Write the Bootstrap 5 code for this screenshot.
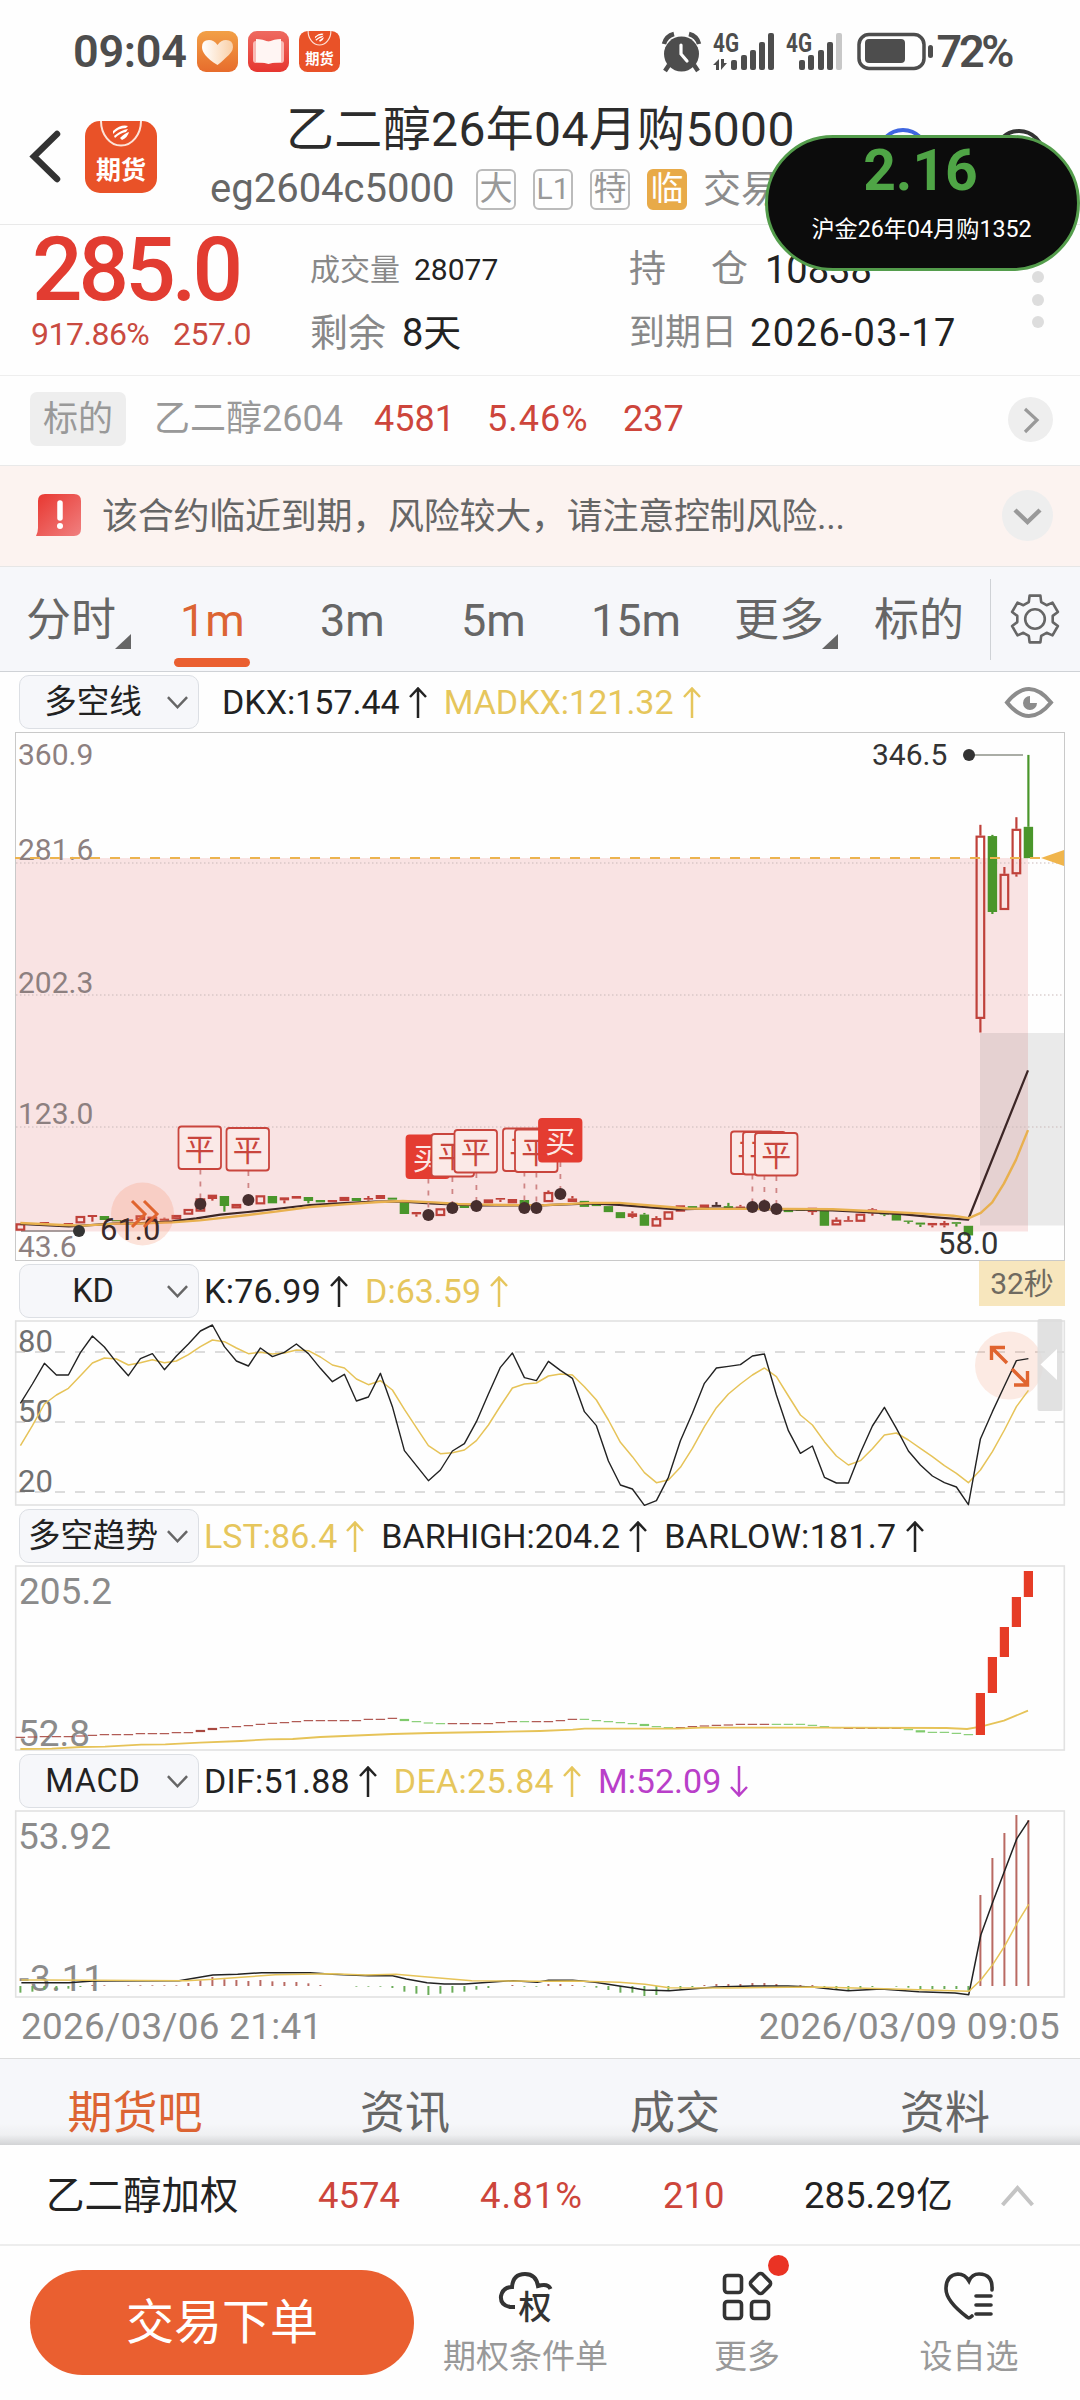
<!DOCTYPE html>
<html lang="zh-CN">
<head>
<meta charset="utf-8">
<meta name="viewport" content="width=device-width, initial-scale=1">
<title>乙二醇26年04月购5000</title>
<link href="https://cdn.jsdelivr.net/npm/bootstrap@5.3.0/dist/css/bootstrap.min.css" rel="stylesheet">
<style>
body{font-family:Roboto,"Noto Sans CJK SC",sans-serif;line-height:1;color:#222;background:#fefefe;width:1080px;overflow-x:hidden}
svg{display:block;flex:none;overflow:visible}
svg text{font-family:Roboto,"Noto Sans CJK SC",sans-serif}
.statusbar{height:100px;padding:0 69px 26px 73px;color:#4d4d4d;font-size:45px;font-weight:600}
.statusbar .app-ico{margin-right:10px}
.titlebar{height:125px;border-bottom:1px solid #e9e9e9}
.title-main{font-size:48px;color:#2c2c2c;margin:6px 0 0 128px;height:48px;letter-spacing:.35px}
.title-sub{font-size:40px;color:#666;margin:14px 0 0 52px;height:42px}
.tag{width:40px;height:41px;border:2px solid #bbb;border-radius:6px;font-size:33px;color:#999;margin-right:17px;padding-bottom:1px}
.tag-warn{background:#e8aa48;border-color:#e8aa48;color:#fff}
.float-pill{top:135px;left:765px;width:315px;height:136px;border:3px solid #549d4c;border-radius:68px;background:#0c0c0c;z-index:5}
.float-pill .num{font-size:57px;font-weight:700;color:#4fa546;margin:4px 4px 0 0}
.float-pill .cap{font-size:23.2px;color:#fff;margin:19px 2px 0 0}
.quote{height:151px;border-bottom:1px solid #eee}
.r1{height:84px;padding-top:5px}.r2{height:48px}
.q1{width:310px;padding-left:31px}.q2{width:319px}
.price{font-size:89px;font-weight:500;color:#e23c31;letter-spacing:-4px;padding-left:1px}
.chg{font-size:32px;color:#c94a40;letter-spacing:-.5px;padding-top:2px}
.lbl{color:#888}
.under{height:90px;border-bottom:1px solid #e9e9e9;padding:0 27px 3px 30px;font-size:36px}
.under .flag{width:96px;height:54px;background:#eee;border-radius:7px;color:#999;font-size:35px}
.up{color:#cd453b}
.round-btn{background:#eee;border-radius:50%}
.notice{height:101px;background:#fcf3f0;border-bottom:1px solid #e6e6e6;padding:0 27px 2px 36px;color:#666;font-size:36px}
.period{height:105px;background:#f6f7fa;border-bottom:1px solid #cfd2d6;color:#666;font-size:45px;white-space:nowrap}
.period .tb{position:relative;height:104px;flex:none;padding-top:2px}
.period .tb.on{color:#dc6433}
.period .tb.on::after{content:"";position:absolute;left:-6px;right:-5px;bottom:4px;height:9px;border-radius:5px;background:#ea5f30}
.corner::after{content:"";position:absolute;right:-17px;bottom:22px;border-left:16px solid transparent;border-bottom:15px solid #666}
.ind{height:60px;font-size:34px;padding-left:19px}
.ind .sel{width:180px;height:54px;border:1.5px solid #dcdfe4;border-radius:10px;background:#f6f7fa;font-size:32.5px;padding-right:9px}
.ind .sel span{flex:1;text-align:center;white-space:nowrap}
.ind .arr{margin:0 17px 0 9px}
.gold{color:#e6c65c}
.vio{color:#b93fc9}
.countdown{width:86px;height:45px;background:#f7e6bd;color:#6f6a60;font-size:30px;margin-right:15px}
.dates{height:60px;padding:0 20px 2px 21px;color:#8b8b8b;font-size:36.8px;letter-spacing:.3px}
.lower-tabs{height:87px;border-top:1px solid #ddd;background:linear-gradient(#f6f7fa 75%,#eff0f2 88%,#d2d3d5);color:#666;font-size:45px}
.lower-tabs div{margin-top:12px;height:74px;line-height:86px}
.idx{height:101px;border-bottom:2px solid #ededed;font-size:36.5px;padding:3px 0 0 46px}
.foot{height:154px;padding-left:30px}
.foot .trade{width:384px;height:105px;border-radius:53px;background:#ea5f30;color:#fff;font-size:48px;margin-top:24px;border:0}
.foot .item{color:#999;font-size:33px;margin-top:24px}
.foot .item svg{margin-bottom:18px}
.reddot{width:21px;height:21px;border-radius:50%;background:#ea3324;top:-15px;left:46px}
</style>
<script src="https://cdn.jsdelivr.net/npm/bootstrap@5.3.0/dist/js/bootstrap.bundle.min.js"></script>
</head>
<body>
<svg width="0" height="0" class="position-absolute">
  <defs>
    <linearGradient id="g1" x1="0" y1="0" x2="0" y2="1"><stop offset="0" stop-color="#f2a046"/><stop offset="1" stop-color="#e76c2c"/></linearGradient>
    <linearGradient id="g2" x1="0" y1="0" x2="0" y2="1"><stop offset="0" stop-color="#ee6a60"/><stop offset="1" stop-color="#e63630"/></linearGradient>
    <linearGradient id="g3" x1="0" y1="0" x2="1" y2="1"><stop offset="0" stop-color="#e8362f"/><stop offset="1" stop-color="#f08080"/></linearGradient>
    <linearGradient id="g4" x1="0" y1="0" x2="1" y2="0"><stop offset="0" stop-color="#fff"/><stop offset="1" stop-color="#f9cfa6"/></linearGradient>
    <symbol id="logo" viewBox="0 0 72 72"><rect width="72" height="72" rx="15" fill="#e95228"/><path d="M16 0a19.5 24 0 0 0 40 0" fill="none" stroke="#fde3d8" stroke-width="2"/><path d="M28 10q8-7 15-5l-2 2q-8 0-13 6zM29 15q7-6 14-7l-2 3q-6 1-11 6zM35 17q5-5 9-6-1 5-7 8z" fill="#fff"/><text x="36" y="58" font-size="25" font-weight="700" fill="#fff" text-anchor="middle">期货</text></symbol>
    <symbol id="up" viewBox="0 0 18 31"><path d="M9 31V2M1 10L9 1.5L17 10" fill="none" stroke="currentColor" stroke-width="2.5"/></symbol>
    <symbol id="dn" viewBox="0 0 18 31"><path d="M9 0V29M1 21L9 29.5L17 21" fill="none" stroke="currentColor" stroke-width="2.5"/></symbol>
    <symbol id="chev" viewBox="0 0 24 15"><path d="M2 2L12 12.500L22 2" fill="none" stroke="#666" stroke-width="2.600"/></symbol>
  </defs>
</svg>

<div class="statusbar d-flex align-items-end">
  <div class="me-auto d-flex align-items-center">
    <span style="margin-right:10px;letter-spacing:-.3px">09:04</span>
    <svg class="app-ico" width="41" height="41"><rect width="41" height="41" rx="9" fill="url(#g1)"/><path d="M20.500 34C9 27 5 21 5 16q0-7 7-7 5 0 8.500 5 3.500-5 8.500-5 7 0 7 7 0 5-7.500 11-5 5-8 7z" fill="url(#g4)"/></svg>
    <svg class="app-ico" width="41" height="41"><rect width="41" height="41" rx="9" fill="url(#g2)"/><rect x="5" y="10" width="31" height="22" rx="3" fill="#f9bab5"/><path d="M8 8q7 0 12.500 3Q26 8 33 8V31q-7 0-12.500 2Q15 31 8 31z" fill="#fff5f3"/></svg>
    <svg width="41" height="41"><use href="#logo"/></svg>
  </div>
  <div class="d-flex align-items-center">
    <svg width="270" height="40" viewBox="663 31 270 40" fill="#4d4d4d" class="me-1">
      <circle cx="681.500" cy="53" r="17.500"/><path d="M664 43q2-8 10-10M699 43q-2-8-10-10M669 64l-4 6M694 64l4 6" stroke="#4d4d4d" stroke-width="4.500" fill="none"/><path d="M681 44v9l6 7" stroke="#fff" stroke-width="3.200" fill="none" stroke-linecap="round"/>
      <text x="713" y="51" font-size="25" font-weight="700" textLength="26" lengthAdjust="spacingAndGlyphs">4G</text>
      <path d="M713 64l6-6v11h-3v-5zM727 62l-6 7V58h3v4z"/>
      <rect x="731" y="59" width="6" height="10" rx="2"/><rect x="741" y="54" width="6" height="15" rx="2"/><rect x="750" y="49" width="6" height="20" rx="2"/><rect x="759" y="41" width="6" height="28" rx="2"/><rect x="768" y="32" width="6" height="37" rx="2"/>
      <text x="786" y="51" font-size="25" font-weight="700" textLength="26" lengthAdjust="spacingAndGlyphs">4G</text>
      <rect x="799" y="59" width="6" height="10" rx="2"/><rect x="808" y="54" width="6" height="15" rx="2"/><rect x="818" y="49" width="6" height="20" rx="2"/><rect x="827" y="41" width="6" height="28" rx="2"/><rect x="836" y="32" width="6" height="37" rx="2" fill="#c8c8c8"/>
      <rect x="859" y="33.500" width="65" height="34" rx="10" fill="none" stroke="#4d4d4d" stroke-width="3.500"/><rect x="865" y="38" width="40" height="24" rx="4"/><rect x="928" y="44" width="5" height="13" rx="2.500"/>
    </svg>
    <span style="letter-spacing:-3.4px">72%</span>
  </div>
</div>

<div class="titlebar d-flex">
  <svg width="158" height="124" viewBox="0 100 158 124"><path d="M57 134L34 156.500L57 179" fill="none" stroke="#333" stroke-width="6.500" stroke-linecap="round"/><use href="#logo" x="85" y="121" width="72" height="72"/></svg>
  <div class="flex-grow-1 text-nowrap">
    <div class="title-main">乙二醇26年04月购5000</div>
    <div class="title-sub d-flex align-items-center"><span style="width:266px">eg2604c5000</span>
      <span class="tag d-flex align-items-center justify-content-center">大</span><span class="tag d-flex align-items-center justify-content-center" style="font-size:30px">L1</span><span class="tag d-flex align-items-center justify-content-center">特</span><span class="tag tag-warn d-flex align-items-center justify-content-center">临</span><span style="font-size:38px;color:#8c8c8c;margin-left:-1px">交易</span></div>
  </div>
  <svg width="200" height="124" viewBox="880 100 200 124" fill="none" stroke-width="4"><circle cx="903" cy="154" r="24" stroke="#3f66e0"/><circle cx="1019" cy="155" r="24" stroke="#333"/></svg>
</div>
<div class="float-pill position-absolute text-center"><div class="num">2.16</div><div class="cap">沪金26年04月购1352</div></div>

<div class="quote d-flex position-relative">
  <div class="q1"><div class="r1 d-flex align-items-center price">285.0</div><div class="r2 d-flex align-items-center chg"><span style="width:142px">917.86%</span><span>257.0</span></div></div>
  <div class="q2"><div class="r1 d-flex align-items-center" style="font-size:30px"><span class="lbl" style="width:104px">成交量</span><span>28077</span></div><div class="r2 d-flex align-items-center" style="font-size:38px"><span class="lbl" style="width:92px">剩余</span><span>8天</span></div></div>
  <div><div class="r1 d-flex align-items-center" style="font-size:38px"><span class="lbl d-flex justify-content-between" style="width:119px;font-size:37px"><i class="fst-normal">持</i><i class="fst-normal">仓</i></span><span style="margin-left:17px">10838</span></div><div class="r2 d-flex align-items-center" style="font-size:38px"><span class="lbl" style="width:121px;font-size:36px">到期日</span><span style="letter-spacing:1.5px">2026-03-17</span></div></div>
  <svg class="ms-auto" width="49" height="150" viewBox="1031 225 49 150" fill="#ddd"><circle cx="1038" cy="277" r="6"/><circle cx="1038" cy="300" r="6"/><circle cx="1038" cy="322" r="6"/></svg>
</div>

<div class="under d-flex align-items-center">
  <span class="flag d-flex align-items-center justify-content-center me-4">标的</span>
  <span style="color:#999;width:220px;margin-left:4px">乙二醇2604</span>
  <span class="up" style="width:113px">4581</span><span class="up" style="width:136px;letter-spacing:1px">5.46%</span><span class="up">237</span>
  <span class="round-btn ms-auto"><svg width="45" height="45"><path d="M17 12L29 23L17 35" fill="none" stroke="#999" stroke-width="3.200"/></svg></span>
</div>

<div class="notice d-flex align-items-center">
  <svg width="45" height="42" style="margin-right:21px"><path d="M2 7Q2 0 9 0H38Q45 0 45 7V35Q45 42 38 42H0Q2 38 2 34z" fill="url(#g3)"/><path d="M24 9V24" stroke="#fff" stroke-width="5.500" stroke-linecap="round"/><circle cx="24" cy="32" r="3" fill="#fff"/></svg>
  <span class="text-nowrap pt-1" style="letter-spacing:-.25px">该合约临近到期，风险较大，请注意控制风险...</span>
  <span class="round-btn ms-auto"><svg width="51" height="51"><path d="M13 20L25.500 32L38 20" fill="none" stroke="#999" stroke-width="4.500"/></svg></span>
</div>

<div class="period d-flex align-items-center">
  <div class="tb corner d-flex align-items-center" style="margin-left:26px;width:88px">分时</div>
  <div class="tb on d-flex align-items-center" style="margin-left:66px;width:65px">1m</div>
  <div class="tb d-flex align-items-center" style="margin-left:75px;width:65px">3m</div>
  <div class="tb d-flex align-items-center" style="margin-left:76px;width:65px">5m</div>
  <div class="tb d-flex align-items-center" style="margin-left:65px;width:90px">15m</div>
  <div class="tb corner d-flex align-items-center" style="margin-left:53px;width:87px">更多</div>
  <div class="tb d-flex align-items-center" style="margin-left:53px;width:90px">标的</div>
  <div style="margin-left:26px;width:1px;height:81px;background:#cfd2d6"></div>
  <svg width="50" height="50" style="margin-left:19px" fill="none" stroke="#666" stroke-width="2.600" stroke-linejoin="round"><path d="M30.400 1.600L31.200 8.100L36.600 11.200L42.500 8.600L47.900 18L42.700 21.900V28.100L47.900 32L42.500 41.400L36.600 38.800L31.200 41.900L30.400 48.400H19.600L18.800 41.900L13.400 38.800L7.500 41.400L2.100 32L7.300 28.100V21.900L2.100 18L7.500 8.600L13.400 11.200L18.800 8.100L19.600 1.600z"/><circle cx="25" cy="25" r="9.800"/></svg>
</div>

<div class="ind d-flex align-items-center">
  <div class="sel d-flex align-items-center"><span>多空线</span><svg width="23" height="15"><use href="#chev"/></svg></div>
  <span style="margin-left:23px">DKX:157.44</span><svg class="arr" width="18" height="31"><use href="#up"/></svg>
  <span class="gold">MADKX:121.32</span><svg class="arr gold" width="18" height="31"><use href="#up"/></svg>
  <svg class="ms-auto" width="48" height="31" style="margin-right:27px" fill="none" stroke="#8c8c8c" stroke-width="4"><path d="M2 15.500Q13 2 24 2T46 15.500Q35 29 24 29T2 15.500z"/><path d="M25 9a7 7 0 1 0 7 7h-7z" fill="#8c8c8c" stroke="none"/></svg>
</div>
<svg id="main" width="1080" height="529" viewBox="0 732 1080 529"></svg>

<div class="ind d-flex align-items-center">
  <div class="sel d-flex align-items-center"><span>KD</span><svg width="23" height="15"><use href="#chev"/></svg></div>
  <span style="margin-left:5px;letter-spacing:.3px">K:76.99</span><svg class="arr" width="18" height="31"><use href="#up"/></svg>
  <span class="gold">D:63.59</span><svg class="arr gold" width="18" height="31"><use href="#up"/></svg>
  <span class="countdown ms-auto align-self-start d-flex align-items-center justify-content-center">32秒</span>
</div>
<svg id="kd" width="1080" height="185" viewBox="0 1321 1080 185"></svg>

<div class="ind d-flex align-items-center">
  <div class="sel d-flex align-items-center"><span>多空趋势</span><svg width="23" height="15"><use href="#chev"/></svg></div>
  <span class="gold" style="margin-left:5px">LST:86.4</span><svg class="arr gold" width="18" height="31"><use href="#up"/></svg>
  <span>BARHIGH:204.2</span><svg class="arr" width="18" height="31"><use href="#up"/></svg>
  <span style="letter-spacing:.3px">BARLOW:181.7</span><svg class="arr" width="18" height="31"><use href="#up"/></svg>
</div>
<svg id="trend" width="1080" height="185" viewBox="0 1566 1080 185"></svg>

<div class="ind d-flex align-items-center">
  <div class="sel d-flex align-items-center"><span style="letter-spacing:.8px">MACD</span><svg width="23" height="15"><use href="#chev"/></svg></div>
  <span style="margin-left:5px;letter-spacing:.2px">DIF:51.88</span><svg class="arr" width="18" height="31"><use href="#up"/></svg>
  <span class="gold" style="letter-spacing:.3px">DEA:25.84</span><svg class="arr gold" width="18" height="31"><use href="#up"/></svg>
  <span class="vio">M:52.09</span><svg class="arr vio" width="18" height="31"><use href="#dn"/></svg>
</div>
<svg id="macd" width="1080" height="187" viewBox="0 1811 1080 187"></svg>

<div class="dates d-flex align-items-center justify-content-between"><span>2026/03/06 21:41</span><span>2026/03/09 09:05</span></div>

<div class="lower-tabs row g-0 text-center">
  <div class="col" style="color:#dc6433">期货吧</div><div class="col">资讯</div><div class="col">成交</div><div class="col">资料</div>
</div>

<div class="idx d-flex align-items-center">
  <span style="width:272px;font-size:38.500px">乙二醇加权</span><span class="up" style="width:162px">4574</span><span class="up" style="width:183px;letter-spacing:1px">4.81%</span><span class="up" style="width:141px">210</span><span style="width:197px">285.29亿</span>
  <svg width="33" height="22"><path d="M1.500 20L16.500 3L31.500 20" fill="none" stroke="#c4c4c4" stroke-width="4"/></svg>
</div>

<div class="foot d-flex align-items-start text-nowrap">
  <button class="trade p-0">交易下单</button>
  <div class="item d-flex flex-column align-items-center" style="margin-left:29px;width:165px">
    <svg width="56" height="52" viewBox="497 2270 56 52"><path d="M514 2307H509Q499 2305 500 2296Q502 2287 511 2287Q512 2274 524 2274Q535 2274 537 2286Q547 2283 549.500 2289" fill="none" stroke="#333" stroke-width="4"/><text x="534" y="2319" font-size="33" fill="#333" font-weight="500" text-anchor="middle">权</text></svg>
    <span>期权条件单</span>
  </div>
  <div class="item d-flex flex-column align-items-center position-relative" style="margin-left:106px;width:66px">
    <div class="position-relative"><svg width="50" height="52" fill="none" stroke="#333" stroke-width="3.600"><rect x="2.500" y="5.500" width="17" height="17" rx="3"/><rect x="2.500" y="31.500" width="17" height="17" rx="3"/><rect x="29.500" y="31.500" width="17" height="17" rx="3"/><rect x="30.500" y="5.500" width="16" height="16" rx="3" transform="rotate(45 38.500 13.500)"/></svg><i class="reddot position-absolute"></i></div>
    <span>更多</span>
  </div>
  <div class="item d-flex flex-column align-items-center" style="margin-left:139px;width:100px">
    <svg width="50" height="52" fill="none" stroke="#333" stroke-width="3.600" stroke-linecap="round"><path d="M48 20Q49 4 35 4Q28 4 25 11Q21 4 14 4Q2 5 2 19Q2 31 23 47Q25 49 28 46M32 26H47M32 35H47M32 44H47"/></svg>
    <span>设自选</span>
  </div>
</div>

<script>
// every bar has the same pitch in all four panels
const X = i => 20.4 + 12 * i;
const R = '#bf413a', G = '#4a962b', GOLD = '#e6c358';
const put = (id, html) => document.getElementById(id).innerHTML = html;
const rect = (x, y, w, h, a) => `<rect x="${x}" y="${y}" width="${w}" height="${h}" ${a}/>`;
const line = (x1, y1, x2, y2, a) => `<path d="M${x1} ${y1}L${x2} ${y2}" fill="none" ${a}/>`;
const poly = (pts, a) => `<polyline points="${pts.map(p => p.join(',')).join(' ')}" fill="none" stroke-linejoin="round" ${a}/>`;
const text = (x, y, s, size, fill, more = '') => `<text x="${x}" y="${y}" font-size="${size}" fill="${fill}" ${more}>${s}</text>`;
const A = y => 1060 + y / 3, B = y => 730 + y / 2.489;
const L = x => x / 2.9037, RR = x => 540 + x / 2.9037;

// kind, body top, body bottom, wick top, wick bottom
const left = {0:'h 490 512',2:'r 486 489',4:'r 489 491',5:'h 468 490',6:'r 465 471 465 485',7:'g 468 480',8:'g 480 483',9:'r 478 484',10:'h 466 480',11:'h 470 485',12:'r 476 482 473 482',13:'h 465 478',14:'h 447 464',15:'h 415 455',16:'r 404 417 404 422',17:'g 408 438 408 455',18:'h 432 445',20:'h 406 433',21:'g 408 430',22:'r 412 421 412 430',23:'r 408 416',24:'g 411 423 411 430',25:'g 420 427',26:'r 420 427',27:'h 411 423',28:'g 414 423',29:'r 414 419 408 422',30:'r 405 417',31:'g 413 419',32:'g 425 462',33:'r 456 463 456 470',35:'h 445 468',37:'g 435 444',39:'r 418 430',40:'r 414 419 414 426',41:'r 417 430',42:'g 420 434'};
const right = {44:'h 1150 1175 1146 1175',46:'r 1166 1175 1160 1175',47:'g 1172 1187',48:'g 1180 1185',49:'g 1185 1200',50:'g 1200 1215',51:'r 1203 1212 1198 1215',52:'g 1206 1234 1202 1234',53:'h 1215 1236 1210 1236',54:'h 1198 1219',55:'r 1183 1199',56:'g 1185 1190',57:'r 1181 1190',58:'k 1182 1187 1175 1187',59:'g 1185 1190 1177 1190',60:'r 1186 1191 1182 1191',64:'g 1194 1200',65:'g 1192 1197',66:'r 1189 1200 1189 1207',67:'g 1197 1234',68:'h 1219 1233 1213 1233',69:'r 1220 1224 1210 1224',70:'h 1204 1224',71:'r 1193 1203 1190 1209',72:'g 1202 1206 1202 1210',73:'g 1205 1221',74:'g 1221 1224 1221 1229',75:'g 1226 1231 1226 1237',76:'r 1227 1233 1227 1238',77:'r 1227 1233 1222 1238',78:'g 1225 1229 1225 1236',79:'g 1234 1258',80:'h 263 719 236 753',81:'g 264 453 261 458',82:'h 358 448 341 448',83:'h 246 359 217 365',84:'g 241 319 62 319'};
const candle = (i, spec, f) => {
  const [k, a, b, c, d] = spec.split(' ').map((v, n) => n ? f(+v) : v), x = X(+i), col = {h: R, r: R, g: G, k: '#4a2f2f'}[k];
  let s = '';
  if (c !== undefined) s += (c < a ? line(x, c, x, a, `stroke="${col}" stroke-width="2.2"`) : '') + (d > b ? line(x, b, x, d, `stroke="${col}" stroke-width="2.2"`) : '');
  return s + (k === 'h' ? rect(x - 3.8, a + 1, 7.6, Math.max(b - a - 2, 2), `fill="none" stroke="${col}" stroke-width="2.2"`) : rect(x - 4.7, a, 9.4, Math.max(b - a, 1.3), `fill="${col}"`));
};
let m = rect(15.5, 732.5, 1049, 528, 'fill="#fefefe" stroke="#c9c9c9" stroke-width="1"');
m += rect(16, 858, 1012, 373.5, 'fill="#f9e3e3"') + rect(980, 1033, 84, 192.5, 'fill="#000" fill-opacity=".08"');
[863, 995, 1127].forEach(y => m += line(16, y, 1064, y, 'stroke="#c9b9b9" stroke-width="1" stroke-dasharray="1.5 2.5"'));
[['360.9', 765], ['281.6', 860], ['202.3', 993], ['123.0', 1124], ['43.6', 1257]].forEach(([s, y]) => m += text(18, y, s, 30, '#8d8080'));
m += line(21, 1231, 79, 1231, 'stroke="#8d8080" stroke-width="1.500"') + line(969, 755, 1023, 755, 'stroke="#8e9288" stroke-width="1.500"');
for (const i in left) m += candle(i, left[i], A);
for (const i in right) m += candle(i, right[i], B);
m += line(15, 858, 1042, 858, 'stroke="#ecb34e" stroke-width="2.200" stroke-dasharray="10 10" stroke-dashoffset="5"') + '<path d="M1041 858L1064 850V866z" fill="#f0b54c"/>';
const dk = [[59,492],[200,499],[240,497],[340,490],[400,490],[500,484],[570,475],[640,464],[720,456],[800,447],[900,435],[1000,429],[1090,425],[1160,424],[1250,430],[1330,434],[1400,436],[1568,436]].map(p => [L(p[0]), A(p[1])])
  .concat([[150,1178],[230,1182],[330,1189],[400,1193],[500,1191],[600,1192],[720,1193],[850,1196],[950,1200],[1050,1205],[1150,1213],[1243,1219],[1417,847]].map(p => [RR(p[0]), B(p[1])]));
const mk = [[59,489],[180,495],[240,497],[340,491],[400,491],[500,487],[580,481],[720,465],[800,455],[900,441],[1000,433],[1100,426],[1170,423],[1260,427],[1330,432],[1400,434],[1568,436]].map(p => [L(p[0]), A(p[1])])
  .concat([[150,1177],[230,1177],[330,1184],[430,1191],[500,1192],[720,1192],[850,1193],[1000,1199],[1100,1203],[1200,1209],[1245,1215],[1280,1202],[1313,1176],[1347,1129],[1382,1070],[1417,996]].map(p => [RR(p[0]), B(p[1])]));
m += poly(dk, 'stroke="#3c2626" stroke-width="2.200"') + poly(mk, 'stroke="#e8b04e" stroke-width="2.400"');
// trade flags: x, y, label, marker column, marker y
[[178.5,1126.5,'平',15,1204],[226.5,1128,'平',19,1200],[406.5,1135.5,'买',34,1215],[431.5,1134,'平',36,1208],[454.5,1130,'平',38,1206],[503,1128.5,'平',42,1208],[515,1129.5,'平',43,1208],[539,1119,'买',45,1194],[731,1131.5,'平',61,1207],[743,1132,'平',62,1206],[755,1133,'平',63,1209]].forEach(([x, y, s, i, my]) => {
  const buy = s === '买';
  m += line(X(i), y + 43, X(i), my, 'stroke="#cf8585" stroke-width="1.800" stroke-dasharray="5 7"');
  m += `<circle cx="${X(i)}" cy="${my}" r="6" fill="#472e2e"/>`;
  m += rect(x, y, 42.5, 42.5, `rx="3" fill="${buy ? '#e43c31' : '#fbe9e7'}" stroke="${buy ? '#e43c31' : '#c9453d'}" stroke-width="1.800"`);
  m += text(x + 21.2, y + 33, s, 30, buy ? '#fde7e3' : '#c9453d', 'text-anchor="middle"');
});
m += '<circle cx="142.500" cy="1214" r="31.500" fill="#f4845a" fill-opacity=".22"/><circle cx="79" cy="1231" r="6" fill="#333"/><circle cx="969" cy="755" r="6" fill="#333"/>';
m += text(100, 1240, '61.0', 31, '#3a2a2a') + text(872, 764.5, '346.5', 30, '#333') + text(938, 1253.5, '58.0', 31, '#333');
m += '<path d="M132 1201L145 1214L132 1227M144 1201L157 1214L144 1227" fill="none" stroke="#e0642f" stroke-width="3"/>';
put('main', m);

const S = y => 1260 + y / 3;
const frame = (y, h) => rect(15.7, y, 1048.6, h, 'fill="#fefefe" stroke="#e2e2e2" stroke-width="1.600"');
const K = [430,372,310,345,345,278,228,261,307,347,296,281,329,288,252,213,195,260,303,318,264,290,277,252,281,325,365,343,423,411,340,440,572,617,662,630,573,551,485,402,322,279,353,362,304,331,355,455,497,603,675,687,736,722,652,542,460,370,324,319,314,288,282,405,512,580,558,652,669,669,578,498,442,505,573,615,648,668,681,734,537,455,378,302,296];
const D = [557,497,432,405,385,347,309,294,297,315,308,299,308,303,284,260,240,245,264,281,277,282,279,270,272,291,315,324,357,374,362,390,448,503,557,581,578,570,542,495,438,384,372,369,348,342,345,380,420,480,547,590,638,668,660,622,565,500,443,402,372,345,324,350,408,465,495,545,588,615,602,566,525,519,540,565,590,617,640,668,630,575,510,440,391];
let k = frame(1321, 184);
[1352, 1422, 1492].forEach(y => k += line(15, y, 1064, y, 'stroke="#dcdcdc" stroke-width="1.800" stroke-dasharray="10 10" stroke-dashoffset="0"'));
[['80', 1352], ['50', 1422], ['20', 1492]].forEach(([s, y]) => k += text(18, y, s, 31, '#707070'));
k += '<circle cx="1009" cy="1365.500" r="34" fill="#f4845a" fill-opacity=".16"/>';
k += poly(D.map((v, i) => [X(i), S(v)]), `stroke="${GOLD}" stroke-width="1.500"`) + poly(K.map((v, i) => [X(i), S(v)]), 'stroke="#222" stroke-width="1.400"');
k += '<path d="M1007 1363L992 1348M991.500 1360V1347.500H1005M1012 1369L1027 1384M1014 1385H1027.500V1371" fill="none" stroke="#e0642f" stroke-width="3.400"/>';
k += rect(1037.5, 1319, 25, 92, 'rx="2" fill="#dcdcdc" fill-opacity=".85"') + '<path d="M1040.500 1364.500L1057 1349V1380z" fill="#fff"/>';
put('kd', k);

// trend ticks
const T = '1432 1431 1430 1430 1430 1428 1426 1424 1424 1424 1421 1421 1421 1418 1418 1413t 1407t 1403 1400 1397 1393 1390 1388 1385 1382 1382 1382 1382 1382 1378 1378 1375 1380gt 1385g 1389g 1391g 1391 1391 1391 1391 1388 1385 1385g 1385 1385 1382 1378 1378g 1382g 1385g 1388g 1391g 1395gt 1400g 1403g 1403 1400 1398 1396 1395 1393 1393 1393 1393g 1393g 1393g 1396g 1400g 1403 1405 1405 1405 1405 1405 1409g 1414gt 1417g 1417g 1420g 1424g'.split(' ');
let t = frame(1566, 184) + text(19, 1604, '205.2', 37, '#8b8b8b') + text(18, 1746, '52.8', 37, '#8b8b8b');
T.forEach((v, i) => { const h = v.includes('t') ? 2.2 : 1.1; t += rect(X(i) - 4.7, S(parseInt(v)) - h / 2, 9.4, h, `fill="${v.includes('g') ? '#7fca6c' : '#a84840'}"`); });
t += poly([[59,1467],[150,1466],[235,1461],[305,1460],[410,1454],[480,1453],[580,1448],[700,1443],[780,1438],[850,1437],[930,1431],[1070,1425],[1140,1422],[1250,1419],[1420,1416],[1568,1413]].map(p => [L(p[0]), S(p[1])])
  .concat([[95,1409],[130,1406],[400,1406],[470,1403],[850,1403],[1180,1404],[1240,1407],[1280,1400],[1347,1382],[1417,1352]].map(p => [RR(p[0]), S(p[1])])), `stroke="${GOLD}" stroke-width="1.800"`);
[[1299,1425],[1191,1299],[1101,1191],[1011,1101],[933,1011]].forEach(([a, b], n) => t += rect(X(80 + n) - 4.6, S(a), 9.2, (b - a) / 3, 'fill="#e63c26"'));
put('trend', t);

// macd histogram, thirds of a pixel from the zero line
const H = [-20,-17,-11,-10,-8,-3,3,2,0,2,2,2,2,2,9,17,27,20,18,15,18,14,12,12,8,3,0,0,-2,-2,-2,-6,-17,-23,-27,-23,-20,-17,-11,-6,0,3,-2,-2,6,6,3,-2,-5,-12,-20,-20,-30,-27,-14,-10,-3,3,6,6,6,9,9,6,0,3,3,-8,-12,-14,-8,-3,0,-2,-5,-9,-9,-9,-9,-14,273,384,459,513,498];
const M = y => 1750 + y / 3;
let c = frame(1811, 186) + text(18, 1849, '53.92', 37, '#8b8b8b') + text(19, 1991, '-3.11', 37, '#8b8b8b', 'textLength="85"');
H.forEach((v, i) => { if (v) c += rect(X(i) - 1, v > 0 ? 1986 - v / 3 : 1986, 2, Math.abs(v) / 3, `fill="${v > 0 ? '#b96a63' : '#6aac58'}"`); });
c += poly([[62,698],[200,698],[270,693],[520,692],[618,675],[690,673],[760,668],[900,668],[965,673],[1070,677],[1140,677],[1180,687],[1240,698],[1290,702],[1350,702],[1400,698],[1490,692],[1560,697]].map(p => [L(p[0]), M(p[1])])
  .concat([[25,691],[95,691],[160,697],[235,709],[270,714],[305,720],[375,722],[440,717],[510,711],[615,708],[720,708],[790,711],[850,718],[895,722],[990,717],[1100,725],[1205,729],[1245,734],[1280,555],[1315,455],[1350,360],[1385,265],[1419,212]].map(p => [RR(p[0]), M(p[1])])), 'stroke="#222" stroke-width="1.500"');
c += poly([[62,690],[130,690],[540,692],[620,688],[700,682],[800,674],[960,671],[1060,675],[1150,673],[1250,682],[1370,692],[1568,694]].map(p => [L(p[0]), M(p[1])])
  .concat([[100,693],[230,697],[305,703],[375,713],[550,714],[800,711],[1000,716],[1245,724],[1280,690],[1315,643],[1350,587],[1385,520],[1419,463]].map(p => [RR(p[0]), M(p[1])])), `stroke="${GOLD}" stroke-width="1.500"`);
put('macd', c);
</script>
</body>
</html>
